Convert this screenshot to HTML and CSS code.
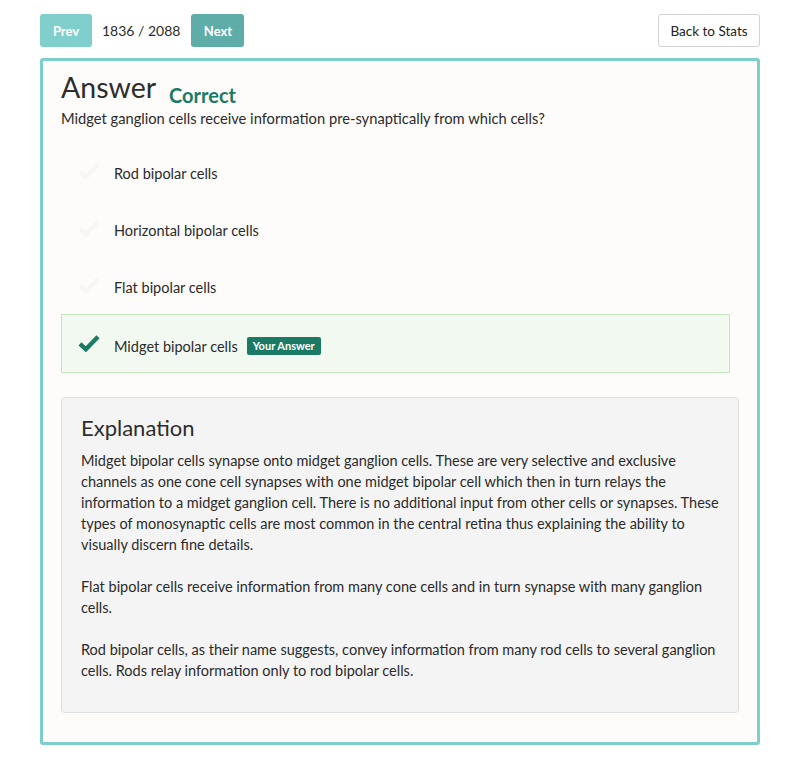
FILE: index.html
```html
<!DOCTYPE html>
<html>
<head>
<meta charset="utf-8">
<link rel="stylesheet" href="styles.css">
</head>
<body>
<div class="page">
  <div class="toolbar">
    <div class="nav">
      <button class="btn btn-prev">Prev</button>
      <span class="counter">1836 / 2088</span>
      <button class="btn btn-next">Next</button>
    </div>
    <button class="btn-back">Back to Stats</button>
  </div>
  <div class="card">
    <div class="title-row">
      <h1 class="title">Answer</h1>
      <span class="status">Correct</span>
    </div>
    <p class="question">Midget ganglion cells receive information pre-synaptically from which cells?</p>
    <ul class="options">
      <li class="option">
        <svg class="check faint" viewBox="0 0 24 20"><path d="M2 11 L8.5 17 L22 3" /></svg>
        <span class="opt-text">Rod bipolar cells</span>
      </li>
      <li class="option">
        <svg class="check faint" viewBox="0 0 24 20"><path d="M2 11 L8.5 17 L22 3" /></svg>
        <span class="opt-text">Horizontal bipolar cells</span>
      </li>
      <li class="option">
        <svg class="check faint" viewBox="0 0 24 20"><path d="M2 11 L8.5 17 L22 3" /></svg>
        <span class="opt-text">Flat bipolar cells</span>
      </li>
      <li class="option selected">
        <svg class="check" viewBox="0 0 24 20"><path d="M2 11 L8.5 17 L22 3" /></svg>
        <span class="opt-text">Midget bipolar cells</span>
        <span class="badge">Your Answer</span>
      </li>
    </ul>
    <div class="explanation">
      <h2 class="exp-title">Explanation</h2>
      <p>Midget bipolar cells synapse onto midget ganglion cells. These are very selective and exclusive channels as one cone cell synapses with one midget bipolar cell which then in turn relays the information to a midget ganglion cell. There is no additional input from other cells or synapses. These types of monosynaptic cells are most common in the central retina thus explaining the ability to visually discern fine details.</p>
      <p>Flat bipolar cells receive information from many cone cells and in turn synapse with many ganglion cells.</p>
      <p>Rod bipolar cells, as their name suggests, convey information from many rod cells to several ganglion cells. Rods relay information only to rod bipolar cells.</p>
    </div>
  </div>
</div>
</body>
</html>
```
FILE: styles.css
```css
* { box-sizing: border-box; }
html, body { margin: 0; padding: 0; background: #ffffff; }
body {
  font-family: "Lato", "Open Sans", sans-serif;
  color: #2b2b2b;
  font-size: 14.5px;
}
.page {
  width: 800px;
  padding: 14px 40px 20px 40px;
}
.toolbar {
  display: flex;
  justify-content: space-between;
  align-items: center;
  height: 33px;
}
.nav {
  display: flex;
  align-items: center;
}
.btn {
  font-family: inherit;
  border: none;
  border-radius: 3px;
  color: #fff;
  font-weight: 700;
  font-size: 13px;
  height: 33px;
  padding: 0;
  cursor: pointer;
}
.btn-prev { background: #80cfcd; width: 52px; }
.btn-next { background: #5fada9; width: 53px; }
.counter {
  font-size: 14px;
  color: #2b2b2b;
  white-space: nowrap;
  margin: 0 11px 0 10px;
}
.btn-back {
  font-family: inherit;
  font-size: 13.5px;
  color: #222;
  background: #fff;
  border: 1px solid #d3d3d3;
  border-radius: 3px;
  height: 33px;
  width: 102px;
  padding: 0;
}
.card {
  margin-top: 11px;
  border: 3px solid #7ecfcc;
  border-radius: 3px;
  background: #fdfcfa;
  height: 687px;
  padding: 8px 18px 0 18px;
}
.title-row {
  display: flex;
  align-items: baseline;
}
.title {
  margin: 0;
  font-weight: 400;
  font-size: 28.5px;
  line-height: 36px;
  color: #2d2d2d;
}
.status {
  margin-left: 13px;
  font-size: 20px;
  font-weight: 700;
  color: #1b7a64;
  position: relative;
  top: 5px;
}
.question {
  margin: 3px 0 0 0;
  font-size: 14.7px;
  line-height: 20px;
}
.options {
  list-style: none;
  margin: 15px 0 0 0;
  padding: 0;
  width: 669px;
}
.option {
  display: flex;
  align-items: center;
  height: 57px;
  padding-left: 16px;
  padding-top: 3px;
  border: 1px solid transparent;
  font-size: 14.5px;
}
.option.selected {
  background: #f2f9f1;
  border-color: #c5e5bd;
  height: 59px;
  padding-top: 5px;
}
.check {
  width: 22px;
  height: 18px;
  margin-right: 14px;
  fill: none;
  stroke: #1b7a64;
  stroke-width: 4.8;
  stroke-linecap: butt;
  stroke-linejoin: miter;
}
.option .check { position: relative; top: -2px; }
.option.selected .check { top: -3px; }
.check.faint { stroke: #f7f6f4; }
.badge {
  margin-left: 9px;
  background: #1b7a64;
  color: #fff;
  font-size: 11px;
  font-weight: 700;
  border-radius: 2px;
  padding: 2px 6px 3px;
  line-height: 13px;
}
.explanation {
  margin-top: 24px;
  background: #f4f4f4;
  border: 1px solid #e0e0e0;
  border-radius: 4px;
  padding: 15px 8px 20px 19px;
  height: 316px;
}
.exp-title {
  margin: 0 0 7px 0;
  font-weight: 400;
  font-size: 22px;
  line-height: 30px;
  color: #2d2d2d;
}
.explanation p {
  margin: 0 0 21px 0;
  line-height: 21px;
  font-size: 14.5px;
}
.explanation p:last-child { margin-bottom: 0; }
```
